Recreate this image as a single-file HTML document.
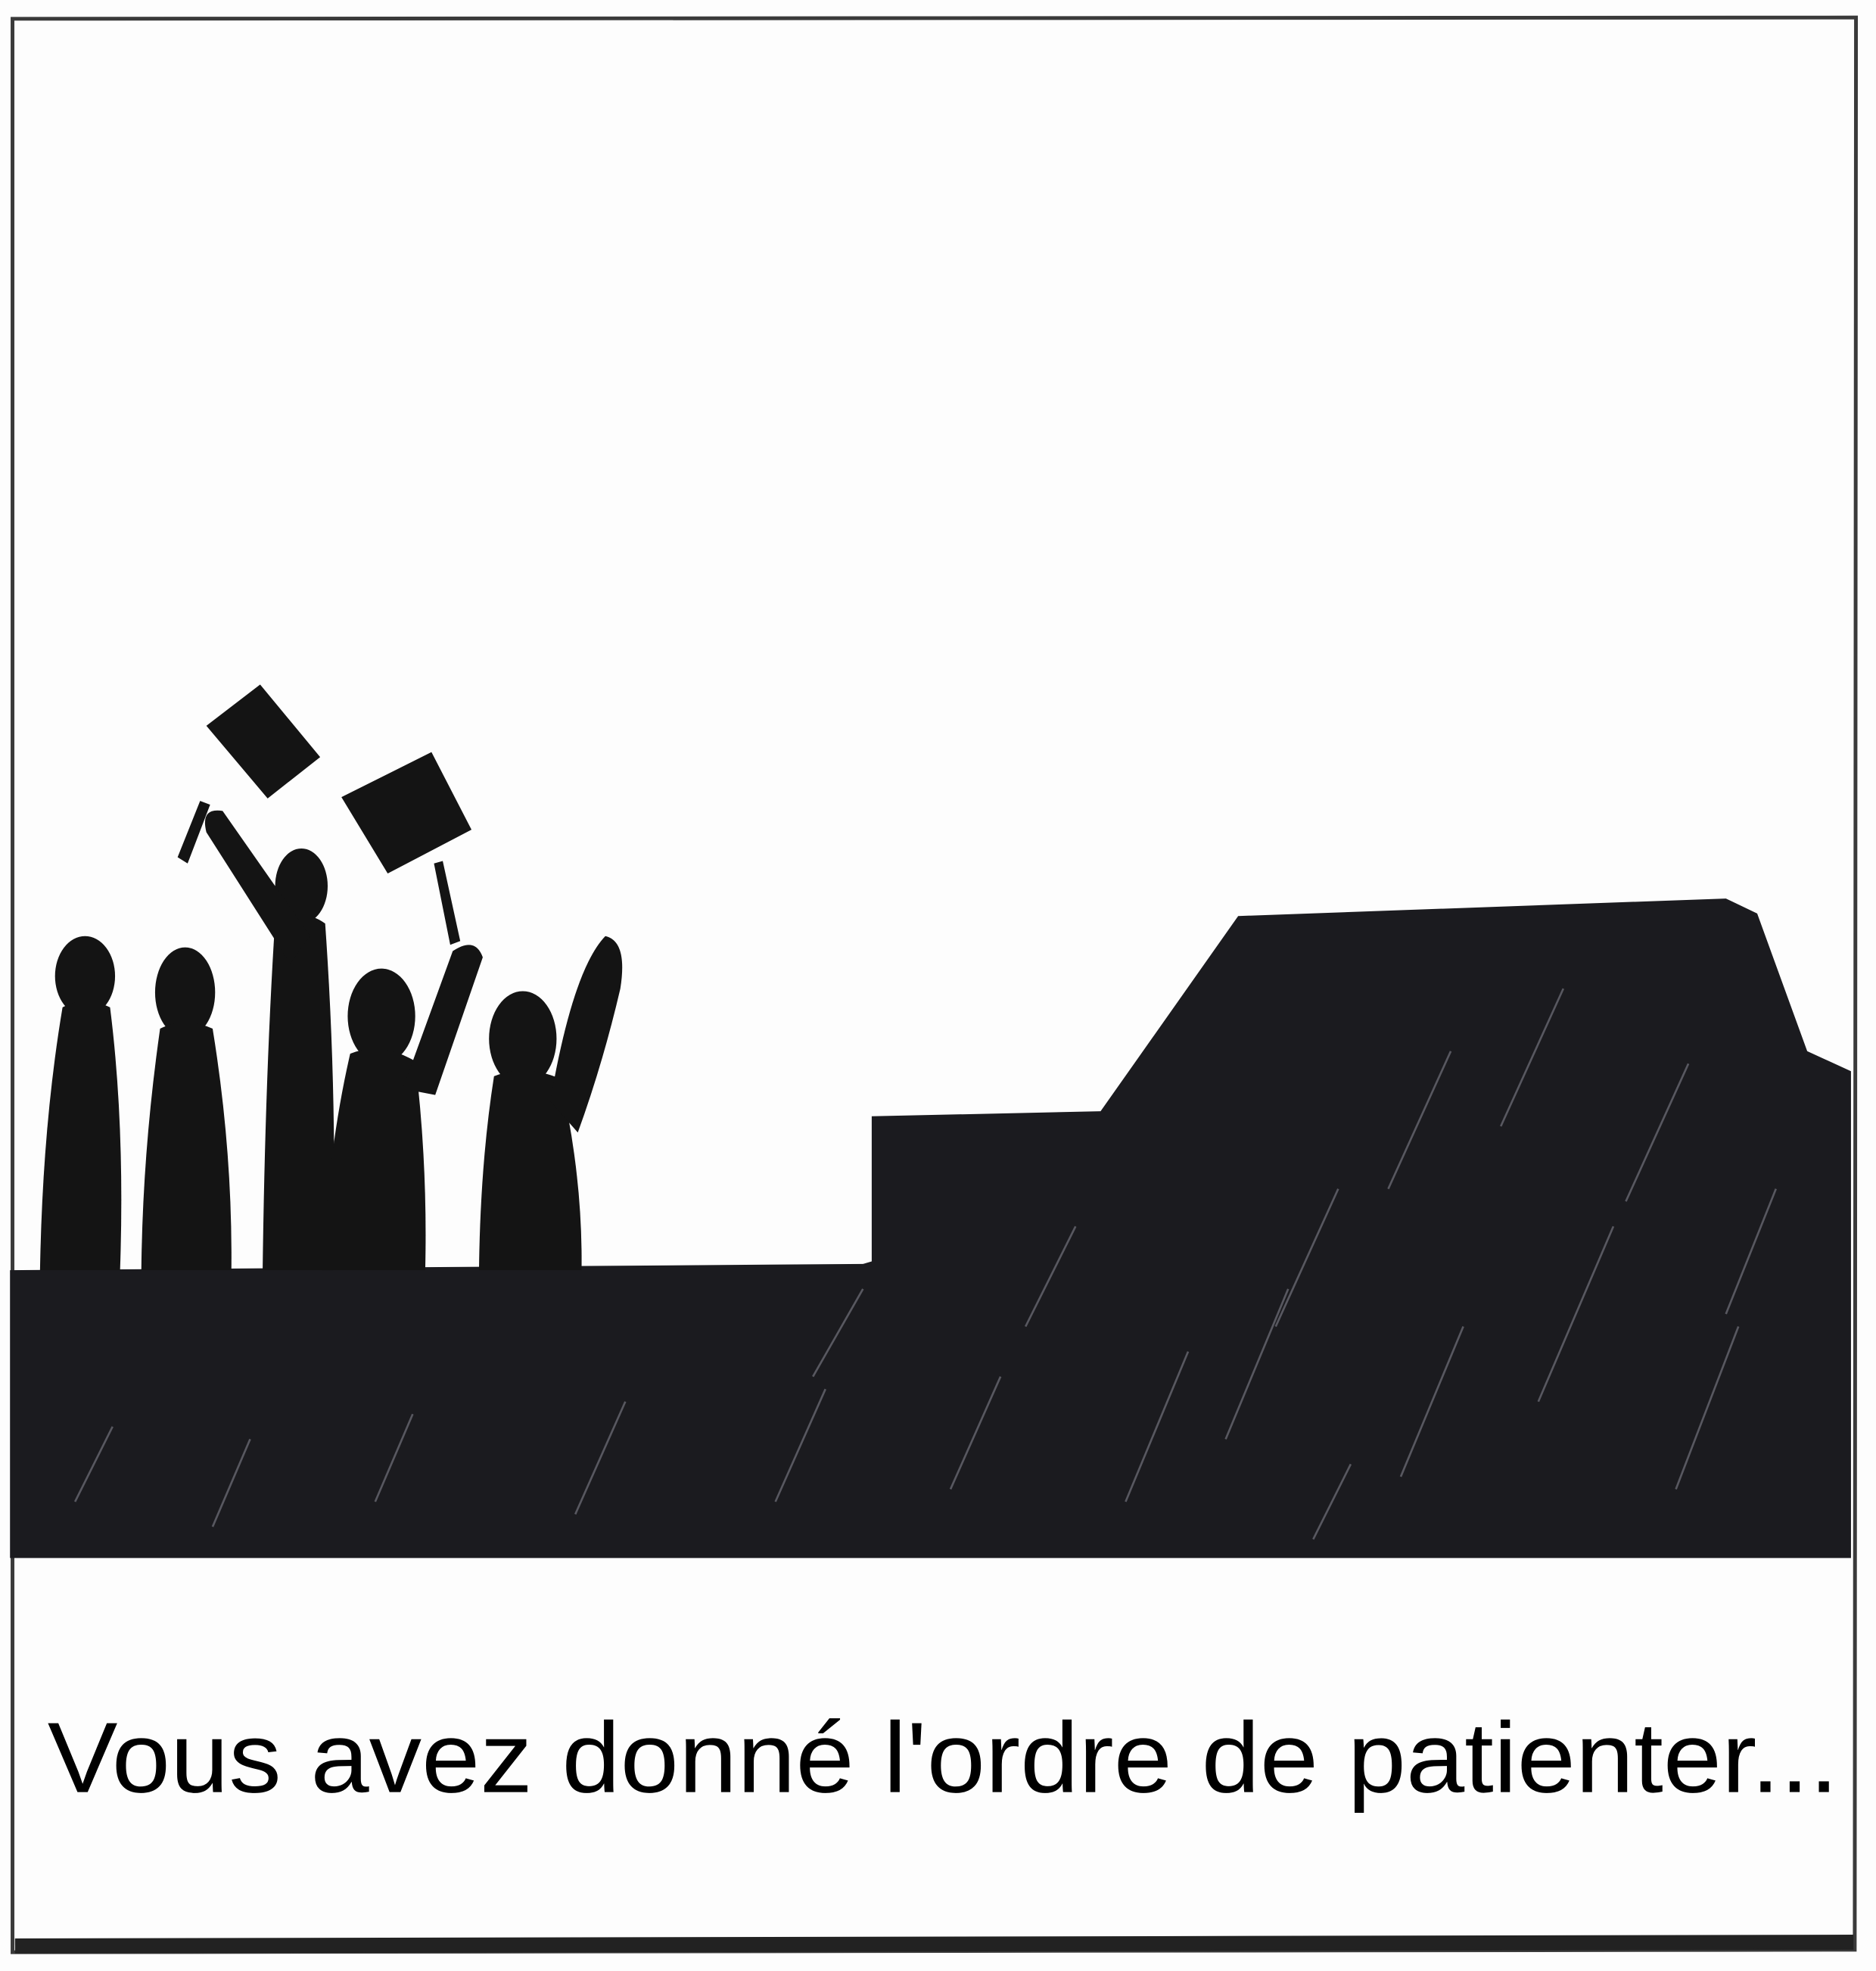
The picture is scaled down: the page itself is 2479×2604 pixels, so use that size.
<!DOCTYPE html>
<html><head><meta charset="utf-8"><style>
html,body{margin:0;padding:0;background:#fff;}
svg{display:block}
</style></head><body>
<svg width="2479" height="2604" viewBox="0 0 1500 1575" preserveAspectRatio="none" xmlns="http://www.w3.org/2000/svg">
<rect width="1500" height="1575" fill="#fdfdfd"/>
<path d="M10 15 L1484 14 L1483 1558 L10 1560 Z" fill="none" stroke="#3a3a3a" stroke-width="3"/>
<path d="M12 1555 L1482 1552" stroke="#222" stroke-width="12"/>
<path d="M8 1015 L690 1010 L697 1008 L697 892 L880 888 L990 732 L1380 718 L1405 730 L1445 840 L1480 856 L1480 1245 L8 1245 Z" fill="#1b1b1f"/>
<g stroke="#8a8a96" stroke-width="1.6" opacity="0.55">
<path d="M60 1200 L90 1140 M170 1220 L200 1150 M300 1200 L330 1130 M460 1210 L500 1120 M620 1200 L660 1110 M650 1100 L690 1030 M760 1190 L800 1100 M900 1200 L950 1080 M980 1150 L1030 1030 M1020 1060 L1070 950 M1120 1180 L1170 1060 M1230 1120 L1290 980 M1340 1190 L1390 1060 M1110 950 L1160 840 M1200 900 L1250 790 M1300 960 L1350 850 M1380 1050 L1420 950 M1050 1230 L1080 1170 M820 1060 L860 980"/>
</g>
<g fill="#141414">
<ellipse cx="68" cy="780" rx="24" ry="32"/>
<path d="M50 805 Q68 795 88 805 Q100 900 96 1015 L32 1015 Q34 900 50 805 Z"/>
<ellipse cx="148" cy="793" rx="24" ry="36"/>
<path d="M128 822 Q148 812 170 822 Q186 920 185 1015 L113 1015 Q114 920 128 822 Z"/>
<ellipse cx="241" cy="708" rx="21" ry="30"/>
<path d="M220 735 Q242 725 260 738 Q270 880 266 1015 L210 1015 Q212 860 220 735 Z"/>
<path d="M232 770 L165 665 Q160 645 178 648 L248 748 Z"/>
<path d="M142 685 L160 640 L168 643 L150 690 Z"/>
<path d="M165 580 L208 547 L256 605 L214 638 Z"/>
<ellipse cx="305" cy="812" rx="27" ry="38"/>
<path d="M280 842 Q305 832 332 848 Q342 930 340 1015 L258 1015 Q262 920 280 842 Z"/>
<path d="M322 870 L362 760 Q380 748 386 765 L348 875 Z"/>
<path d="M360 755 L347 690 L354 688 L368 752 Z"/>
<path d="M273 637 L345 601 L377 663 L310 698 Z"/>
<ellipse cx="418" cy="830" rx="27" ry="38"/>
<path d="M395 860 Q420 850 448 862 Q466 940 465 1015 L383 1015 Q384 930 395 860 Z"/>
<path d="M440 880 Q458 775 484 748 Q502 752 496 790 Q482 850 462 905 Z"/>
</g>
<text x="38" y="1432" font-family="Liberation Sans, sans-serif" font-size="80" fill="#000" textLength="1432" lengthAdjust="spacingAndGlyphs">Vous avez donné l'ordre de patienter...</text>
</svg>
</body></html>
